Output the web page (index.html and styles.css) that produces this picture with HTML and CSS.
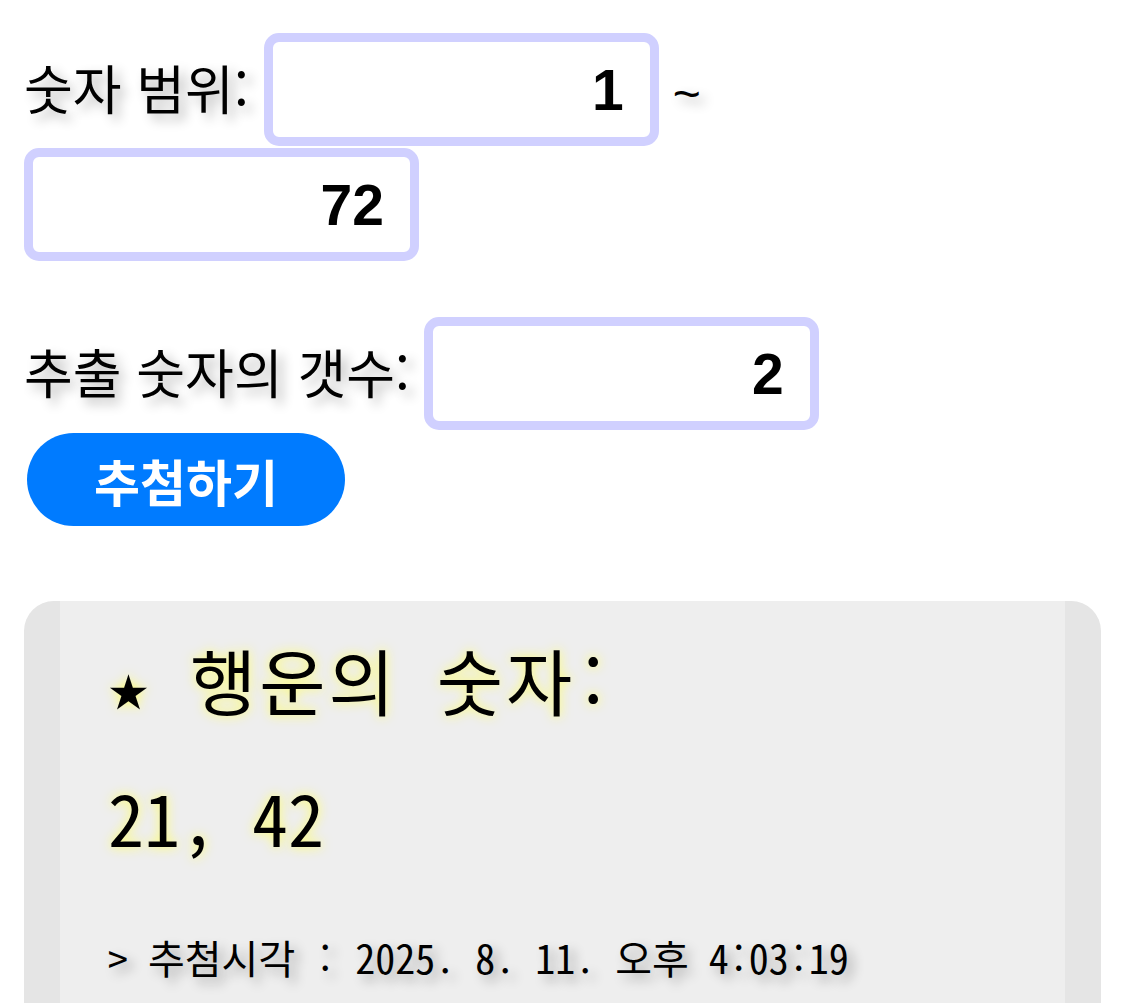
FILE: index.html
```html
<!DOCTYPE html>
<html lang="ko">
<head>
<meta charset="utf-8">
<title>행운의 숫자 추첨</title>
<link rel="stylesheet" href="styles.css">
</head>
<body>
  <div class="range-row">
    <label class="label" for="min">숫자 범위:</label>
    <input class="num-input" id="min" type="text" value="1">
    <span class="tilde">~</span>
    <input class="num-input" id="max" type="text" value="72">
  </div>
  <div class="count-row">
    <label class="label" for="count">추출 숫자의 갯수:</label>
    <input class="num-input" id="count" type="text" value="2">
  </div>
  <button class="draw-btn" type="button">추첨하기</button>
  <div class="result">
    <h3 class="result-title"><span class="star">★</span> 행운의 숫자:</h3>
    <p class="result-nums">21, 42</p>
    <p class="result-time">&gt; 추첨시각 : 2025. 8. 11. 오후 4:03:19</p>
  </div>
</body>
</html>
```
FILE: styles.css
```css
html, body {
  background: #ffffff;
}
body {
  margin: 24px;
  font-family: "Noto Sans CJK KR", "Noto Sans", sans-serif;
  color: #000;
}
.range-row,
.count-row {
  display: flex;
  flex-wrap: wrap;
  align-items: baseline;
  row-gap: 2px;
}
.range-row {
  padding-top: 9px;
}
.count-row {
  margin-top: 56px;
}
.label {
  font-size: 53px;
  margin-right: 15px;
  text-shadow: 6px 6px 12px rgba(0, 0, 0, 0.3);
}
.count-row .label {
  margin-right: 14px;
}
.tilde {
  font-family: "Liberation Sans", Arial, sans-serif;
  font-size: 48px;
  margin: 0 24px 0 14px;
  text-shadow: 6px 6px 12px rgba(0, 0, 0, 0.3);
}
.num-input {
  box-sizing: border-box;
  width: 395px;
  height: 113px;
  border: 9px solid #d0d0ff;
  border-radius: 15px;
  padding: 0 26px;
  margin: 0;
  background: #fff;
  font-family: "Liberation Sans", Arial, sans-serif;
  font-weight: bold;
  font-size: 57px;
  text-align: right;
  color: #000;
  outline: none;
}
.draw-btn {
  display: block;
  margin: 3px 0 0 3px;
  width: 318px;
  height: 93px;
  border: none;
  border-radius: 47px;
  background: #007bff;
  color: #fff;
  font-family: "Noto Sans CJK KR", sans-serif;
  font-weight: bold;
  font-size: 50px;
  padding: 0;
}
.result {
  margin-top: 75px;
  background: #eeeeee;
  border-left: 36px solid #e5e5e5;
  border-right: 36px solid #e5e5e5;
  border-radius: 30px;
  padding: 35px 48px 60px;
  font-family: "Noto Sans Mono CJK KR", "DejaVu Sans Mono", monospace;
}
.result-title {
  margin: 0;
  font-size: 72px;
  line-height: 86px;
  font-weight: normal;
  letter-spacing: 3px;
  text-shadow: 0 0 12px #ffff66;
}
.star {
  font-family: "DejaVu Sans Mono", monospace;
  font-size: 68px;
  line-height: 40px;
  letter-spacing: 0;
  display: inline-block;
  width: 43px;
}
.result-nums {
  margin: 51px 0 0;
  font-size: 72px;
  line-height: 86px;
  text-shadow: 0 0 12px #ffff66;
}
.result-time {
  margin: 75px 0 0;
  font-size: 40px;
  line-height: 47px;
  text-shadow: 6px 6px 12px rgba(0, 0, 0, 0.3);
}
```
